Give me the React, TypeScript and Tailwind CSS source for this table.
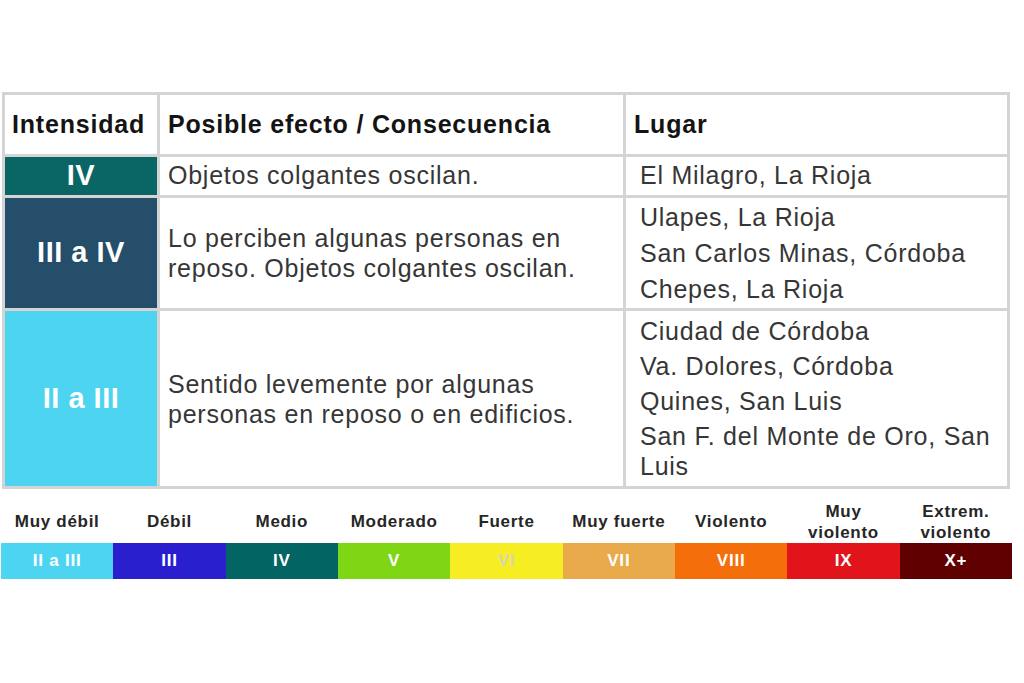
import React from 'react';

const font = { fontFamily: '"Liberation Sans", Arial, sans-serif' };

const levels = [
  { label: ['Muy débil'], roman: 'II a III', bg: 'bg-[#4dd4f0]', fg: 'text-white' },
  { label: ['Débil'], roman: 'III', bg: 'bg-[#2a1fcf]', fg: 'text-white' },
  { label: ['Medio'], roman: 'IV', bg: 'bg-[#036464]', fg: 'text-white' },
  { label: ['Moderado'], roman: 'V', bg: 'bg-[#7fd614]', fg: 'text-white' },
  { label: ['Fuerte'], roman: 'VI', bg: 'bg-[#f6ee22]', fg: 'text-[#d9d6b0]' },
  { label: ['Muy fuerte'], roman: 'VII', bg: 'bg-[#e9aa4b]', fg: 'text-white' },
  { label: ['Violento'], roman: 'VIII', bg: 'bg-[#f56e0c]', fg: 'text-white' },
  { label: ['Muy', 'violento'], roman: 'IX', bg: 'bg-[#e1141b]', fg: 'text-white' },
  { label: ['Extrem.', 'violento'], roman: 'X+', bg: 'bg-[#600101]', fg: 'text-white' },
];

export default function App() {
  return (
    <div className="w-[1024px] h-[683px] bg-white overflow-hidden" style={font}>
      {/* table */}
      <div className="ml-[2px] mt-[92px] w-[1008px] grid grid-cols-[152px_463px_381px] grid-rows-[59px_38px_110px_175px] gap-[3px] p-[3px] bg-[#d4d4d4] text-[25px] tracking-[0.75px] text-[#363636]">
        <div className="bg-white flex items-center pl-[7px] font-bold text-[#141414] tracking-[0.8px]">Intensidad</div>
        <div className="bg-white flex items-center pl-[8px] font-bold text-[#141414] tracking-[0.8px]">Posible efecto / Consecuencia</div>
        <div className="bg-white flex items-center pl-[8px] font-bold text-[#141414] tracking-[0.8px]">Lugar</div>

        <div className="bg-[#0a6565] flex items-center justify-center text-white font-bold text-[29px] tracking-[0.5px]">IV</div>
        <div className="bg-white flex items-center pl-[8px]">Objetos colgantes oscilan.</div>
        <div className="bg-white flex items-center pl-[14px]">El Milagro, La Rioja</div>

        <div className="bg-[#244e69] flex items-center justify-center text-white font-bold text-[29px] tracking-[0.5px]">III a IV</div>
        <div className="bg-white flex items-center pl-[8px] leading-[30px] whitespace-nowrap">
          <p>Lo perciben algunas personas en<br />reposo. Objetos colgantes oscilan.</p>
        </div>
        <div className="bg-white flex flex-col justify-center gap-[6px] pl-[14px] leading-[30px] whitespace-nowrap">
          <p>Ulapes, La Rioja</p>
          <p>San Carlos Minas, Córdoba</p>
          <p>Chepes, La Rioja</p>
        </div>

        <div className="bg-[#4dd4f0] flex items-center justify-center text-white font-bold text-[29px] tracking-[0.5px]">II a III</div>
        <div className="bg-white flex items-center pl-[8px] leading-[30px] whitespace-nowrap">
          <p>Sentido levemente por algunas<br />personas en reposo o en edificios.</p>
        </div>
        <div className="bg-white flex flex-col justify-center gap-[5px] pl-[14px] leading-[30px] whitespace-nowrap">
          <p>Ciudad de Córdoba</p>
          <p>Va. Dolores, Córdoba</p>
          <p>Quines, San Luis</p>
          <p>San F. del Monte de Oro, San<br />Luis</p>
        </div>
      </div>

      {/* scale legend */}
      <div className="ml-[1px] mt-[11px] w-[1011px] grid grid-cols-9">
        {levels.map((l) => (
          <div key={l.roman} className="flex flex-col">
            <div className="h-[43px] flex flex-col items-center justify-center text-[17px] leading-[21px] font-bold tracking-[0.7px] text-[#262626]">
              {l.label.map((t) => (
                <span key={t}>{t}</span>
              ))}
            </div>
            <div className={`h-[36px] flex items-center justify-center text-[17px] font-bold tracking-[0.8px] ${l.bg} ${l.fg}`}>
              {l.roman}
            </div>
          </div>
        ))}
      </div>
    </div>
  );
}
